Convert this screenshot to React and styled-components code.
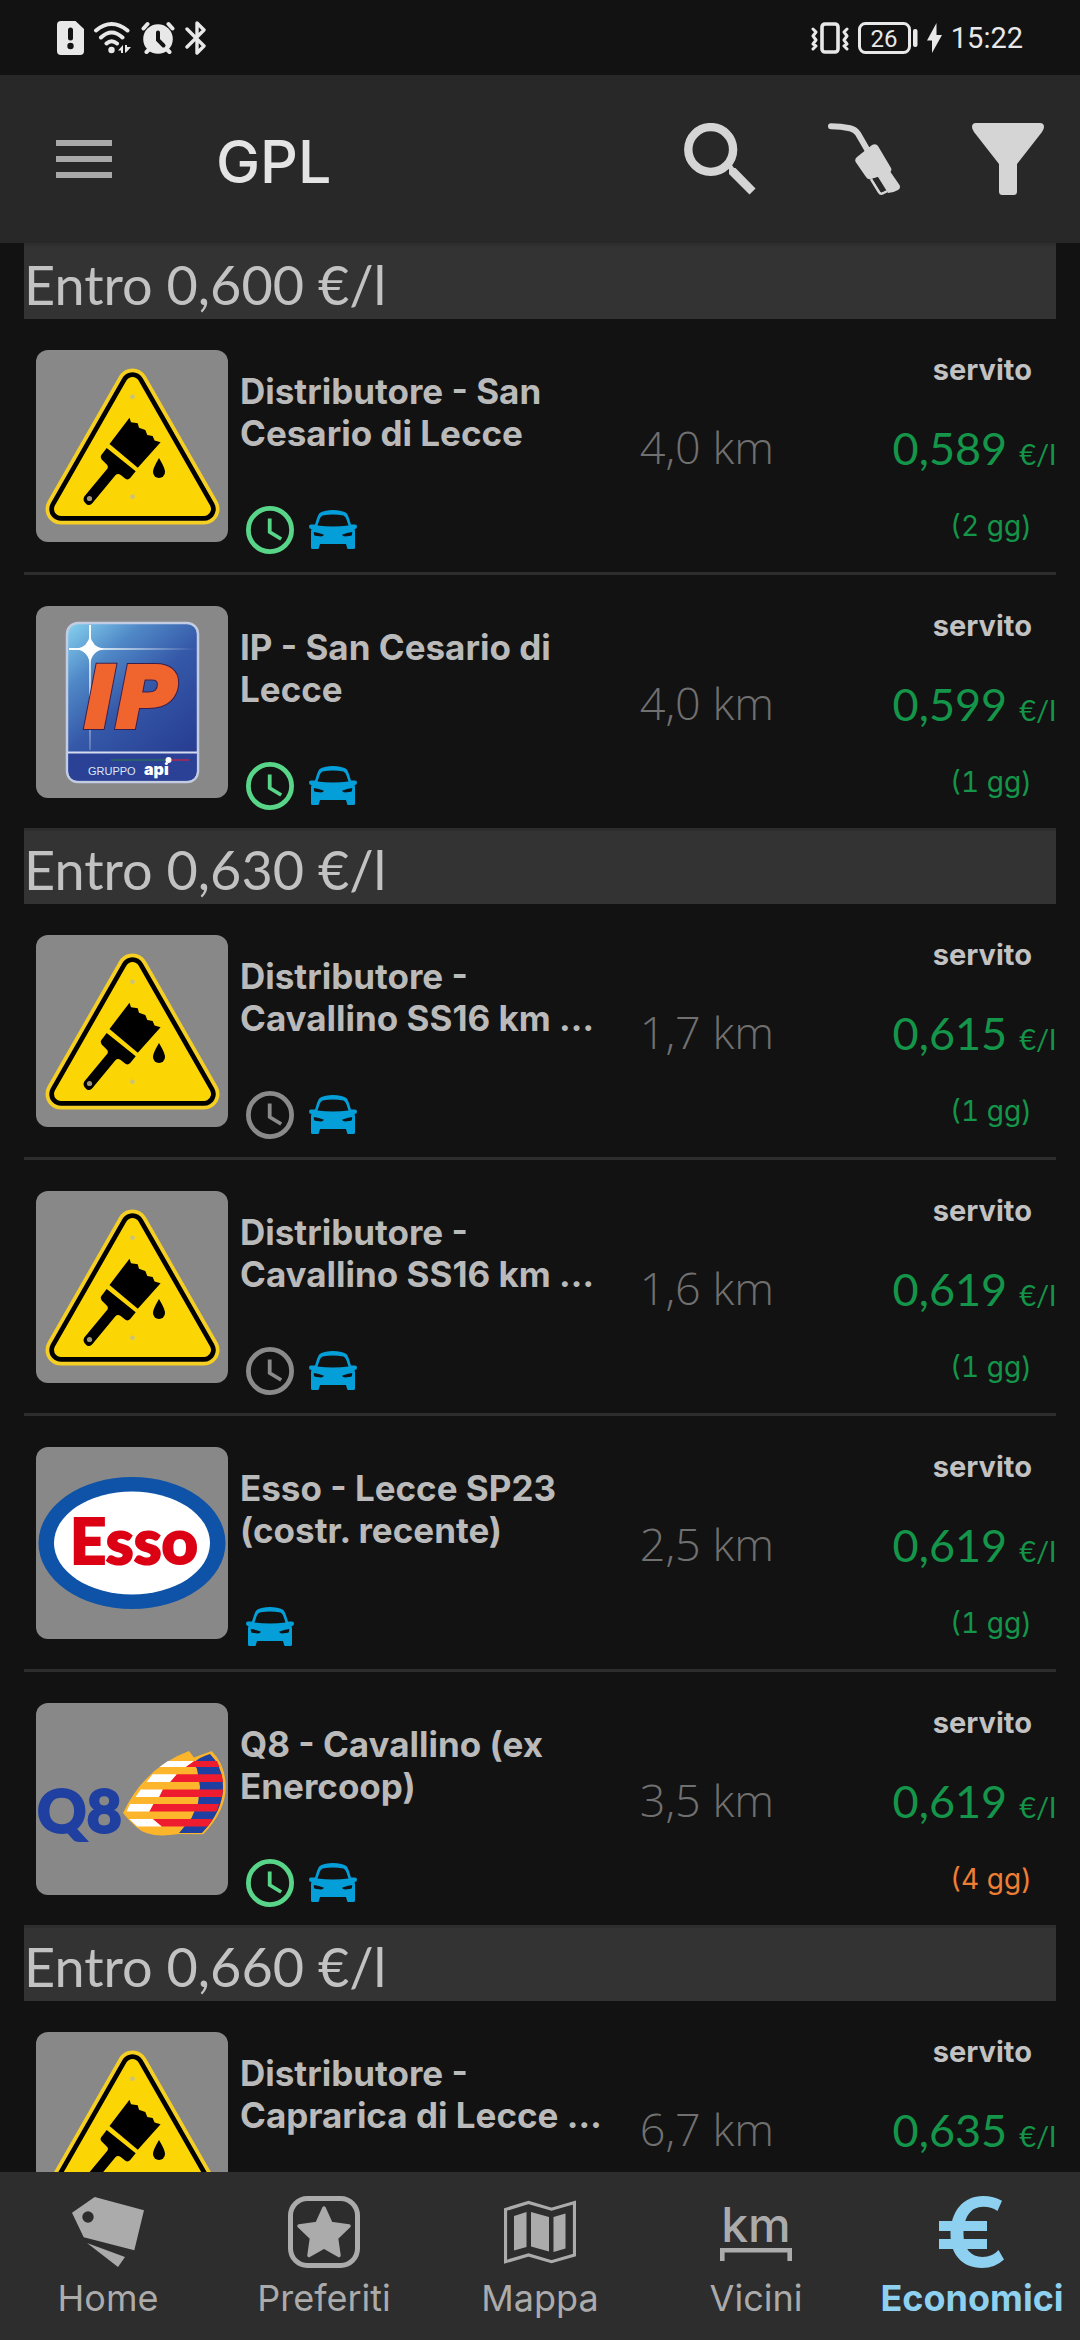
import React from 'react'
import styled, { createGlobalStyle } from 'styled-components'

const GlobalStyle = createGlobalStyle`
  * {
    box-sizing: border-box;
  }
  body {
    margin: 0;
    background: #121212;
    font-family: Inter, Roboto, sans-serif;
  }
  svg {
    display: block;
    flex: none;
  }
`;

const Screen = styled.div`
  display: flex;
  flex-direction: column;
  height: 100vh;
  color: #bababa;
`;

const StatusBar = styled.div`
  display: flex;
  flex: none;
  justify-content: space-between;
  align-items: center;
  height: 75px;
  padding: 0 57px;
`;

const StatusGroup = styled.div`
  display: flex;
  align-items: center;
  gap: ${({ $gap }) => $gap}px;
  color: #e8e8e8;
`;

const Time = styled.span`
  font-family: Roboto, sans-serif;
  font-size: 29px;
  line-height: 36px;
`;

const AppBar = styled.header`
  display: flex;
  flex: none;
  align-items: center;
  gap: 72px;
  height: 168px;
  padding: 0 36px 0 56px;
  background: #282828;
`;

const IconButton = styled.button`
  display: flex;
  padding: 0;
  border: 0;
  background: none;
  color: ${({ $color }) => $color || '#d5d5d5'};
`;

const Title = styled.h1`
  flex: 1;
  margin: 0 0 0 32px;
  padding-top: 6px;
  font-size: 59px;
  font-weight: 500;
  line-height: 72px;
  color: #e4e4e4;
`;

const List = styled.main`
  flex: 1;
  min-height: 0;
  overflow: hidden;
  padding: 0 24px;
`;

const GroupTitle = styled.h2`
  margin: 0;
  padding: 7px 0 2px;
  border-top: 3px solid #2e2e2e;
  background: #333;
  font-family: Lato, sans-serif;
  font-size: 54px;
  font-weight: 400;
  line-height: 64px;
  color: #c2c2c2;
`;

const Stations = styled.ul`
  margin: 0;
  padding: 0;
  list-style: none;
`;

const Station = styled.li`
  display: flex;
  align-items: flex-start;
  min-height: 253px;
  padding: 31px 0 0 12px;

  & + & {
    min-height: 256px;
    border-top: 3px solid #2d2d2d;
  }
`;

const LogoBox = styled.div`
  flex: none;
  width: 192px;
  height: 192px;
  border-radius: 12px;
  background: #888;
`;

const Info = styled.div`
  flex: 1;
  min-width: 0;
  padding: 20px 0 0 12px;
`;

const Name = styled.h3`
  max-width: 376px;
  height: 84px;
  margin: 0 0 52px;
  overflow: hidden;
  font-size: 35px;
  font-weight: 700;
  line-height: 42px;
`;

const Services = styled.div`
  display: flex;
  gap: 15px;
  padding-left: 6px;
`;

const Distance = styled.span`
  flex: none;
  padding-top: 67px;
  font-family: 'Open Sans', sans-serif;
  font-size: 45px;
  font-weight: 300;
  line-height: 60px;
  color: #707070;
`;

const Prices = styled.div`
  display: flex;
  flex: none;
  flex-direction: column;
  align-items: flex-end;
  gap: 30px;
  width: 282px;
  padding-top: 2px;
`;

const Mode = styled.span`
  padding-right: 24px;
  font-size: 29px;
  font-weight: 700;
  line-height: 36px;
  color: #c2c2c2;
`;

const Price = styled.span`
  display: flex;
  align-items: baseline;
  gap: 12px;
  font-family: Lato, sans-serif;
  font-size: 45px;
  line-height: 60px;
  color: #14954a;
`;

const Unit = styled.span`
  font-size: 29px;
  line-height: 36px;
`;

const Age = styled.span`
  padding-right: 24px;
  font-size: 28px;
  font-variant-numeric: tabular-nums;
  line-height: 36px;
  color: ${({ $old }) => ($old ? '#ee7e33' : '#14954a')};
`;

const NavBar = styled.nav`
  display: flex;
  flex: none;
  padding: 24px 0 20px;
  background: #2d2d2d;
`;

const NavLink = styled.a`
  display: flex;
  flex: 1 1 0;
  min-width: 0;
  flex-direction: column;
  align-items: center;
  gap: 8px;
  font-size: 36px;
  font-weight: ${({ $active }) => ($active ? 700 : 400)};
  line-height: 44px;
  text-decoration: none;
  color: ${({ $active }) => ($active ? '#8dd0ef' : '#ababab')};
`;

const SimIcon = () => (
  <svg width="27" height="34" viewBox="0 0 27 34">
    <path d="M4 0h14.500l8.500 8v22a4 4 0 0 1-4 4H4a4 4 0 0 1-4-4V4a4 4 0 0 1 4-4z" fill="currentColor" />
    <path d="M13.500 9v8" stroke="#121212" strokeWidth="5" strokeLinecap="round" />
    <circle cx="13.500" cy="25" r="3.200" fill="#121212" />
  </svg>
);

const WifiIcon = () => (
  <svg width="37" height="34" viewBox="0 0 37 34" fill="none" stroke="currentColor" strokeWidth="4" strokeLinecap="round">
    <path d="M2 9.500Q17.500-3.500 33.500 9.500M7 16.500Q17.500 6.500 28.500 16.500M12.500 22.500Q17.500 18 23 22.500" />
    <circle cx="17.500" cy="29" r="3.200" fill="currentColor" stroke="none" />
    <path d="M24 29.500l5-5.500v8h-2v-2.500zM31 24v8l2-1.500 4-4.500h-4V24z" fill="currentColor" stroke="none" />
  </svg>
);

const AlarmIcon = () => (
  <svg width="34" height="34" viewBox="0 0 34 34" stroke="currentColor" strokeWidth="4" strokeLinecap="round" fill="none">
    <circle cx="17" cy="18" r="14.800" fill="currentColor" stroke="none" />
    <path d="M2.500 7.500l4-4.500M31.500 7.500l-4-4.500M5.500 31l4-4M28.500 31l-4-4" />
    <path d="M17 11.500v7.500l5.500 5.500" stroke="#121212" />
  </svg>
);

const BluetoothIcon = () => (
  <svg width="21" height="34" viewBox="0 0 21 34" fill="none" stroke="currentColor" strokeWidth="3.400" strokeLinecap="round" strokeLinejoin="round">
    <path d="M2 8l17 17-7 7V2l7 7L2 26" />
  </svg>
);

const VibrateIcon = () => (
  <svg width="38" height="32" viewBox="0 0 38 32" fill="none" stroke="currentColor" strokeWidth="3.600" strokeLinejoin="round" strokeLinecap="round">
    <rect x="11" y="2" width="16" height="28" rx="3" />
    <path d="M2 7l3 3-3 4 3 4-3 4 3 2-3 3M36 7l-3 3 3 4-3 4 3 4-3 2 3 3" strokeWidth="3" />
  </svg>
);

const BatteryIcon = () => (
  <svg width="60" height="32" viewBox="0 0 60 32">
    <rect x="1.500" y="1.500" width="50" height="29" rx="6" fill="none" stroke="currentColor" strokeWidth="3" />
    <rect x="55" y="7" width="4.500" height="18" rx="2" fill="currentColor" />
    <text x="26" y="25" textAnchor="middle" fontFamily="Roboto, sans-serif" fontSize="24" fill="currentColor">26</text>
  </svg>
);

const BoltIcon = () => (
  <svg width="15" height="30" viewBox="0 0 15 30">
    <path d="M9.500 0v12h5.500L5 30V17.500H0z" fill="currentColor" />
  </svg>
);

const MenuIcon = () => (
  <svg width="56" height="38" viewBox="0 0 56 38" fill="currentColor">
    <path d="M0 0h56v6H0zM0 16h56v6H0zM0 32h56v6H0z" />
  </svg>
);

const SearchIcon = () => (
  <svg width="72" height="72" viewBox="0 0 72 72" fill="currentColor">
    <circle cx="26.700" cy="26.500" r="22.400" fill="none" stroke="currentColor" strokeWidth="8.400" />
    <path d="M42 41l4-2 4 6h1.500L71.500 65.500l-6 6L45 51v-4.500z" />
  </svg>
);

const NozzleIcon = () => (
  <svg width="72" height="72" viewBox="0 0 72 72" fill="currentColor">
    <path d="M3 3.200q10 0 19 2 5 1 8 5.500L40 28" fill="none" stroke="currentColor" strokeWidth="6" strokeLinecap="round" />
    <path d="M44 22q4-2 6 1l13 22q1 2-.5 4L71.500 62q1.500 3-1.500 5-5 3-10 3l-10-16-7 2q-3 1-5-2L28 39.500q-2-3 1-5.500z" />
    <path d="M43 56l8 13q1.500 2.500 4 1.200l4-2" fill="none" stroke="currentColor" strokeWidth="2.600" />
    <path d="M44.500 55.800l5.200-1.600 8 13.400-4.500 1.800z" fill="#282828" />
  </svg>
);

const FilterIcon = () => (
  <svg width="72" height="72" viewBox="0 0 72 72" fill="currentColor">
    <path d="M4 0h64a4 4 0 0 1 4 4q0 2-2 5L45 41v27.500a3.500 3.500 0 0 1-3.500 3.500h-11a3.500 3.500 0 0 1-3.500-3.500V41L2 9Q0 6 0 4a4 4 0 0 1 4-4z" />
  </svg>
);

const ClockIcon = ({ open }) => (
  <svg width="48" height="48" viewBox="0 0 48 48" fill="none" stroke={open ? '#58d588' : '#8a8a8a'}>
    <circle cx="24" cy="24" r="21.600" strokeWidth="4.800" />
    <path d="M23.700 12.500V26l11.500 7" strokeWidth="3.800" />
  </svg>
);

const CarIcon = () => (
  <svg width="48" height="48" viewBox="0 0 48 48" fill="#049fd9" fillRule="evenodd">
    <path d="M2 18.500h4C8 13 8.500 8.500 11.500 6.500Q16 4 24 4t12.500 2.500C39.500 8.500 40 13 42 18.500h4q2 0 2 2.200t-2.500 2.300q.5 1 .5 3V41.500q0 1.500-1.500 1.500h-5q-1.500 0-1.500-1.500l-1-3.500h-26l-1 3.500q0 1.500-1.500 1.500h-5Q2 43 2 41.500V26q0-2 .5-3Q0 23 0 20.700t2-2.200zM13.500 9.500q-2 .8-3 4l-2 6q15.500 2 31 0l-2-6q-1-3.200-3-4-10.500-2-21 0zM4.800 26q0 3.500 1.200 3.800l6 .7q2.200-.2 3-1.800Q10 26.500 4.800 26zM43.200 26q0 3.500-1.200 3.800l-6 .7q-2.200-.2-3-1.800 5-2.200 10.200-2.700z" />
  </svg>
);

const SignLogo = () => (
  <svg width="192" height="192" viewBox="0 0 192 192" strokeLinejoin="round">
    <path d="M96.500 34L168 159H25z" fill="#f5cf23" stroke="#f5cf23" strokeWidth="31" />
    <path d="M96.500 34L168 159H25z" fill="#000" stroke="#000" strokeWidth="23.500" />
    <path d="M96.500 34L168 159H25z" fill="#fbd504" stroke="#fbd504" strokeWidth="14" />
    <circle cx="96.500" cy="46.700" r="2.300" fill="#c8c184" />
    <circle cx="96.500" cy="146.700" r="2.300" fill="#c8c184" />
    <path d="M93.500 67.700l1.500 4.500 6.700 1 1.300 4.500 6.300 2.300 2 5 5.300 1 2 4.500 6 1.800-22.800 25.400L73.500 94z" />
    <path d="M70.700 98l29 23.300-5.500 6.700q-2 2.200-4.500 1l-5-4q-3-2-5.500.5L56.500 153q-2.500 3.500-6 1.200-4.500-3.700-2.200-7.700L71.500 118.500q1-2-.3-3.500l-5.500-5.500q-2-2-.5-4.300z" />
    <circle cx="53.500" cy="148.500" r="2.600" fill="#9d9678" />
    <path d="M123 108q6 10 6 14a6 6 0 0 1-12 0q0-4 6-14z" />
  </svg>
);

const IpLogo = () => (
  <svg width="192" height="192" viewBox="0 0 192 192">
    <defs>
      <linearGradient id="ipSky" x1="0" y1="0" x2="0.7" y2="1">
        <stop offset="0" stopColor="#86d3f0" />
        <stop offset="0.28" stopColor="#4f87c6" />
        <stop offset="0.55" stopColor="#3558a8" />
        <stop offset="1" stopColor="#273d92" />
      </linearGradient>
      <linearGradient id="ipRayX" gradientUnits="userSpaceOnUse" x1="33" y1="0" x2="160" y2="0">
        <stop offset="0" stopColor="#fff" />
        <stop offset="1" stopColor="#fff" stopOpacity="0" />
      </linearGradient>
      <linearGradient id="ipRayY" gradientUnits="userSpaceOnUse" x1="0" y1="19" x2="0" y2="144">
        <stop offset="0" stopColor="#fff" />
        <stop offset="1" stopColor="#fff" stopOpacity="0.2" />
      </linearGradient>
    </defs>
    <rect x="31" y="17" width="131" height="159" rx="11" fill="url(#ipSky)" stroke="#c3cce2" strokeWidth="2.500" />
    <path d="M32.500 147h128v18q0 9.500-9.500 9.500H42q-9.500 0-9.500-9.500z" fill="#2a4196" />
    <path d="M32 146.500h129" stroke="#d5dcf0" strokeWidth="2" />
    <rect x="33" y="42" width="127" height="2" fill="url(#ipRayX)" />
    <rect x="53" y="19" width="2" height="125" fill="url(#ipRayY)" />
    <path d="M54 29q2 12 14 14-12 2-14 15-2-13-14-15 12-2 14-14z" fill="#fff" />
    <text x="95" y="121" textAnchor="middle" fontFamily="DejaVu Sans" fontWeight="700" fontStyle="italic" fontSize="84" fill="#f0642d" stroke="#3a1f4d" strokeWidth="6" paintOrder="stroke">IP</text>
    <text x="95" y="121" textAnchor="middle" fontFamily="DejaVu Sans" fontWeight="700" fontStyle="italic" fontSize="84" fill="#f0642d" stroke="#f0642d" strokeWidth="4" aria-hidden="true">IP</text>
    <path d="M75 154h56" stroke="#2c6a5c" strokeWidth="1.500" />
    <path d="M134 154h19" stroke="#b0284e" strokeWidth="1.500" />
    <circle cx="132.500" cy="154" r="3" fill="#fff" />
    <text x="52" y="169" fontFamily="Liberation Sans" fontSize="11" fill="#dfe5f5">GRUPPO</text>
    <text x="108" y="169" fontFamily="Inter" fontWeight="900" fontSize="16" fill="#fff">api</text>
  </svg>
);

const EssoLogo = () => (
  <svg width="192" height="192" viewBox="0 0 192 192">
    <ellipse cx="96" cy="96" rx="93.500" ry="66" fill="#0e53a7" />
    <ellipse cx="96" cy="96" rx="78" ry="51.500" fill="#fff" />
    <text x="98" y="117" textAnchor="middle" fontFamily="Lato, DejaVu Sans" fontWeight="900" fontSize="63" fill="#dc0014" stroke="#dc0014" strokeWidth="2">Esso</text>
  </svg>
);

const Q8Logo = () => (
  <svg width="192" height="192" viewBox="0 0 192 192">
    <text x="1" y="130" fontFamily="Lato" fontWeight="900" fontSize="61" fill="#1f40a0" stroke="#1f40a0" strokeWidth="2">Q8</text>
    <path d="M87 110q22-46 66-62l5 6.500L175.700 48q14 14 14 36 0 24-22.400 47.300l-25-.3q-30 5-42-7-8-7-13.300-14z" fill="#fdb62b" />
    <path d="M174 51q13 13 13 33 0 24-21 46h-23l12.500-15 6.500-15 2-16-3-18-3.500-6q6-6 16.500-9z" fill="#1f40a0" />
    <g fill="#ee1c2e">
      <path d="M158 58h23l2.500 6H149.500z" />
      <path d="M140.700 71.300h45l1.300 7.700h-53z" />
      <path d="M126.700 86.500h60.300l-1 7.500h-63z" />
      <path d="M117.300 101h66l-3 7.500h-67z" />
      <path d="M116.700 116h60l-5 7.500h-46z" />
    </g>
    <g fill="#fff">
      <path d="M132 58h26l-8.500 6h-26z" />
      <path d="M116.700 71.300h24l-6.700 7.700h-23.500z" />
      <path d="M104.700 86.500h22l-3.700 7.500H99.500z" />
      <path d="M94 101h23.300l-4 7.500H90.500z" />
      <path d="M93.300 116h23.400l9 7.500h-24.500z" />
    </g>
  </svg>
);

const TagIcon = () => (
  <svg width="72" height="72" viewBox="0 0 72 72" fill="currentColor" fillRule="evenodd">
    <path d="M22.700 1L72 14.300l-9.700 40L11.700 41.300 0 16.700zM16 15.300a5.700 5.700 0 1 0 0 11.400 5.700 5.700 0 1 0 0-11.400z" />
    <path d="M15 47l38 14-7 10z" />
  </svg>
);

const StarIcon = () => (
  <svg width="72" height="72" viewBox="0 0 72 72" fill="currentColor" stroke="currentColor">
    <rect x="2.500" y="2.500" width="67" height="67" rx="17" fill="none" strokeWidth="5" />
    <path d="M36 12l7 15.500 18 2.500-12.500 12 2.500 17.500-15-8.500-15 8.500L23.500 42 11 30l18-2.500z" strokeWidth="3.500" strokeLinejoin="round" />
  </svg>
);

const MapIcon = () => (
  <svg width="72" height="72" viewBox="0 0 72 72" fill="currentColor">
    <path d="M1.500 13.500l23-7 23 6.700 23-6.700v52.500l-23 6.700-23-6.700-23 6.700z" fill="none" stroke="currentColor" strokeWidth="3.200" />
    <path d="M10 20l12.500-4v35L10 54.500zM27 16l18 5v34.500l-18-5zM49.500 21l12-3.500v35l-12 3.500z" />
  </svg>
);

const KmIcon = () => (
  <svg width="72" height="72" viewBox="0 0 72 72" fill="currentColor">
    <text x="36" y="45.500" textAnchor="middle" fontFamily="Inter" fontWeight="500" fontSize="48">km</text>
    <path d="M2.300 65V54.200h67.400V65" fill="none" stroke="currentColor" strokeWidth="4.600" />
  </svg>
);

const EuroIcon = () => (
  <svg width="72" height="72" viewBox="0 0 72 72" fill="currentColor">
    <path d="M66 4.700L61.500 15Q55 10.800 47.500 10.800C34 10.800 27.500 22 27.500 38.500c0 14 7.500 22.500 19 22.500q10 0 16-7L68 63.500Q59 72 46 72C26 72 14.500 58 14.500 38.500 14.500 15 27.500 0 47 0q11 0 19 4.700z" />
    <path d="M3 25h48v10H3zM3 43h48v10H3z" />
  </svg>
);

const logos = {
  sign: SignLogo,
  ip: IpLogo,
  esso: EssoLogo,
  q8: Q8Logo,
};

const groups = [
  {
    title: 'Entro 0,600 €/l',
    stations: [
      { logo: 'sign', name: 'Distributore - San Cesario di Lecce', clock: 'open', km: '4,0', price: '0,589', days: 2 },
      { logo: 'ip', name: 'IP - San Cesario di Lecce', clock: 'open', km: '4,0', price: '0,599', days: 1 },
    ],
  },
  {
    title: 'Entro 0,630 €/l',
    stations: [
      { logo: 'sign', name: 'Distributore - Cavallino SS16 km …', clock: 'closed', km: '1,7', price: '0,615', days: 1 },
      { logo: 'sign', name: 'Distributore - Cavallino SS16 km …', clock: 'closed', km: '1,6', price: '0,619', days: 1 },
      { logo: 'esso', name: 'Esso - Lecce SP23 (costr. recente)', km: '2,5', price: '0,619', days: 1 },
      { logo: 'q8', name: 'Q8 - Cavallino (ex Enercoop)', clock: 'open', km: '3,5', price: '0,619', days: 4 },
    ],
  },
  {
    title: 'Entro 0,660 €/l',
    stations: [
      { logo: 'sign', name: 'Distributore - Caprarica di Lecce …', clock: 'closed', km: '6,7', price: '0,635' },
    ],
  },
];

const tabs = [
  { label: 'Home', Icon: TagIcon },
  { label: 'Preferiti', Icon: StarIcon },
  { label: 'Mappa', Icon: MapIcon },
  { label: 'Vicini', Icon: KmIcon },
  { label: 'Economici', Icon: EuroIcon, active: true },
];

const StationRow = ({ station }) => {
  const Logo = logos[station.logo];

  return (
    <Station>
      <LogoBox>
        <Logo />
      </LogoBox>
      <Info>
        <Name>{station.name}</Name>
        <Services>
          {station.clock && <ClockIcon open={station.clock === 'open'} />}
          <CarIcon />
        </Services>
      </Info>
      <Distance>{station.km} km</Distance>
      <Prices>
        <Mode>servito</Mode>
        <Price>
          {station.price}
          <Unit>€/l</Unit>
        </Price>
        {station.days && <Age $old={station.days > 3}>({station.days} gg)</Age>}
      </Prices>
    </Station>
  );
};

export default function App() {
  return (
    <Screen>
      <GlobalStyle />
      <StatusBar>
        <StatusGroup $gap={10}>
          <SimIcon />
          <WifiIcon />
          <AlarmIcon />
          <BluetoothIcon />
        </StatusGroup>
        <StatusGroup $gap={9}>
          <VibrateIcon />
          <BatteryIcon />
          <BoltIcon />
          <Time>15:22</Time>
        </StatusGroup>
      </StatusBar>
      <AppBar>
        <IconButton $color="#a8a8a8" aria-label="Menu">
          <MenuIcon />
        </IconButton>
        <Title>GPL</Title>
        <IconButton aria-label="Cerca">
          <SearchIcon />
        </IconButton>
        <IconButton aria-label="Carburante">
          <NozzleIcon />
        </IconButton>
        <IconButton aria-label="Filtra">
          <FilterIcon />
        </IconButton>
      </AppBar>
      <List>
        {groups.map(group => (
          <section key={group.title}>
            <GroupTitle>{group.title}</GroupTitle>
            <Stations>
              {group.stations.map((station, index) => (
                <StationRow key={index} station={station} />
              ))}
            </Stations>
          </section>
        ))}
      </List>
      <NavBar>
        {tabs.map(({ label, Icon, active }) => (
          <NavLink key={label} href="#" $active={active}>
            <Icon />
            {label}
          </NavLink>
        ))}
      </NavBar>
    </Screen>
  )
}
